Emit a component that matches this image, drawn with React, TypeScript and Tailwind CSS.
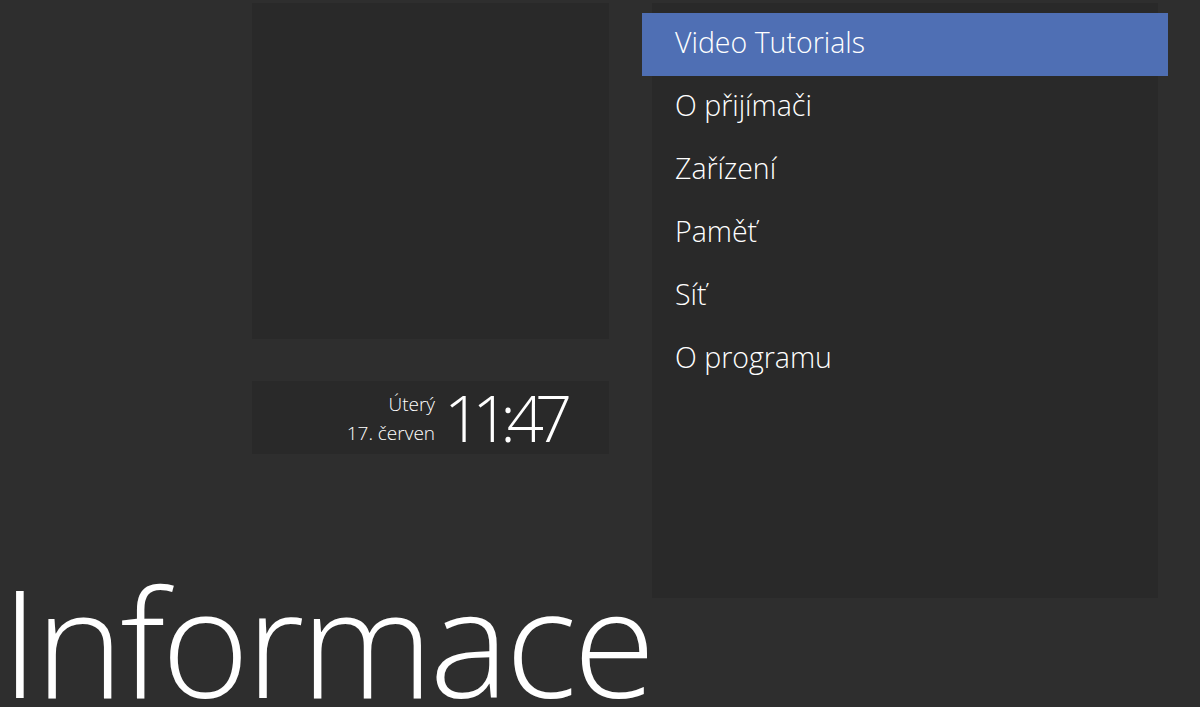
import React from "react";

const items = ["Video Tutorials", "O přijímači", "Zařízení", "Paměť", "Síť", "O programu"];

export default function App() {
  return (
    <div
      className="w-[1200px] h-[707px] bg-[#2e2e2e] overflow-hidden flex flex-col text-white"
      style={{ fontFamily: '"Open Sans", "Noto Sans", sans-serif' }}
    >
      <div className="flex pt-[3px] h-[598px] shrink-0">
        <div className="w-[609px] pl-[252px] flex flex-col">
          <div className="w-[357px] h-[336px] bg-[#292929]" />
          <div className="w-[357px] h-[73px] mt-[42px] bg-[#292929] flex items-center justify-end pr-[46px] gap-[9px]">
            <div className="flex flex-col items-end font-light text-[19px] leading-[29px] pt-[3px]">
              <span>Úterý</span>
              <span>17. červen</span>
            </div>
            <div className="font-light text-[65px] leading-none tracking-[-9px]">11:47</div>
          </div>
        </div>
        <div className="ml-[43px] w-[506px] h-[595px] bg-[#292929] pt-[10px] flex flex-col">
          {items.map((t, i) => (
            <div
              key={t}
              className={
                i === 0
                  ? "h-[63px] -mx-[10px] pl-[33px] pb-[4px] bg-[#4f6fb4] flex items-center text-[28.5px] font-light"
                  : "h-[63px] pl-[23px] pb-[4px] flex items-center text-[28.5px] font-light"
              }
            >
              {t}
            </div>
          ))}
        </div>
      </div>
      <div className="-mt-[33px] pl-[1px] font-light text-[150px] leading-none tracking-[-3.6px] whitespace-nowrap">
        Informace
      </div>
    </div>
  );
}
